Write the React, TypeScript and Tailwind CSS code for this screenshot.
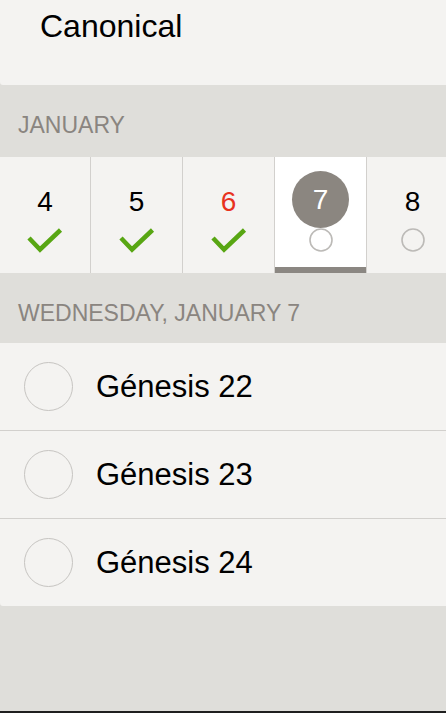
import React from 'react';

const days = [
  { n: 4, done: true, w: 'w-[91px]' },
  { n: 5, done: true, w: 'w-[92px]' },
  { n: 6, done: true, w: 'w-[92px]', red: true },
  { n: 7, done: false, w: 'w-[92px]', selected: true },
  { n: 8, done: false, w: 'w-[92px]' },
];

const readings = ['Génesis 22', 'Génesis 23', 'Génesis 24'];

function Check() {
  return (
    <svg width="36" height="26" viewBox="0 0 36 26">
      <path d="M2 11 L13 22.5 L33.5 3" fill="none" stroke="#58a613" strokeWidth="4.5" />
    </svg>
  );
}

function SmallCircle() {
  return (
    <svg width="36" height="26" viewBox="0 0 36 26">
      <circle cx="18" cy="13" r="11" fill="none" stroke="#bcbab7" strokeWidth="1.6" />
    </svg>
  );
}

export default function App() {
  return (
    <div className="h-[713px] flex flex-col bg-[#dfdeda] font-['Liberation_Sans',Arial,sans-serif] overflow-hidden">
      <div className="h-[85px] bg-[#f4f3f1] pl-[40px] pt-[10px] rounded-bl-[3px]">
        <div className="text-[32px] leading-[32px] text-black">Canonical</div>
      </div>

      <div className="h-[72px] pl-[18px] pt-[29px]">
        <div className="text-[23px] leading-[23px] text-[#8a8580]">JANUARY</div>
      </div>

      <div className="h-[116px] flex bg-[#f4f3f1] overflow-hidden">
        {days.map((d) => (
          <div
            key={d.n}
            className={`${d.w} shrink-0 flex flex-col items-center pt-[14px] relative border-r border-[#d2d0cd] ${
              d.selected ? 'bg-white' : ''
            }`}
          >
            {d.selected ? (
              <div className="w-[57px] h-[57px] rounded-full bg-[#8b8680] flex items-center justify-center text-white text-[28px] leading-[28px]">
                {d.n}
              </div>
            ) : (
              <div
                className={`h-[57px] flex items-center justify-center pt-[5px] text-[28px] leading-[28px] ${
                  d.red ? 'text-[#e8321e]' : 'text-black'
                }`}
              >
                {d.n}
              </div>
            )}
            <div className="mt-[-1px]">{d.done ? <Check /> : <SmallCircle />}</div>
            {d.selected && <div className="absolute left-0 right-0 bottom-0 h-[6px] bg-[#8b8782]" />}
          </div>
        ))}
      </div>

      <div className="h-[70px] pl-[18px] pt-[29px]">
        <div className="text-[23px] leading-[23px] text-[#8a8580]">WEDNESDAY, JANUARY 7</div>
      </div>

      <div className="bg-[#f4f3f1] rounded-bl-[3px]">
        {readings.map((r, i) => (
          <div
            key={r}
            className={`flex items-center ${i < readings.length - 1 ? 'h-[88px] border-b border-[#d2d0cd]' : 'h-[87px]'}`}
          >
            <div className="ml-[24px] w-[49px] h-[49px] rounded-full border-[1.6px] border-[#c6c4c1]" />
            <div className="ml-[23px] text-[31px] leading-[31px] text-black">{r}</div>
          </div>
        ))}
      </div>

      <div className="flex-1" />
      <div className="h-[2px] bg-[#1f1f1f]" />
    </div>
  );
}
